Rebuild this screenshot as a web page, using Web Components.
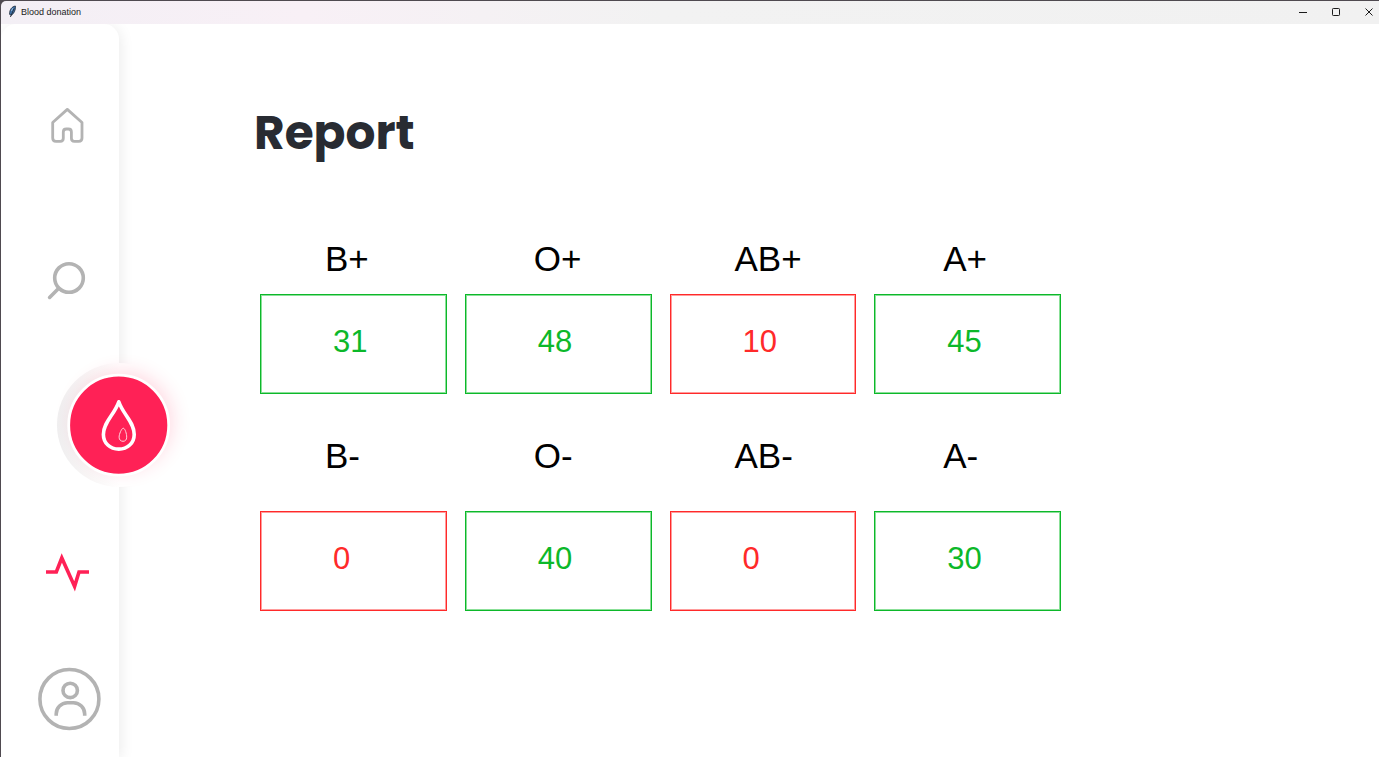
<!DOCTYPE html>
<html lang="en">
<head>
<meta charset="utf-8">
<title>Blood donation</title>
<style>
  html, body { margin: 0; min-height: 100%; background: #fff; }
  body { font-family: "Liberation Sans", Arial, sans-serif; color: #000; }
</style>
</head>
<body>
<app-window>
  <title-bar slot="title">Blood donation</title-bar>
  <side-nav slot="nav"></side-nav>
  <report-page heading="Report">
    <stock-row>
      <stock-cell group="B+">31</stock-cell>
      <stock-cell group="O+">48</stock-cell>
      <stock-cell group="AB+" low>10</stock-cell>
      <stock-cell group="A+">45</stock-cell>
    </stock-row>
    <stock-row loose>
      <stock-cell group="B-" low>0</stock-cell>
      <stock-cell group="O-">40</stock-cell>
      <stock-cell group="AB-" low>0</stock-cell>
      <stock-cell group="A-">30</stock-cell>
    </stock-row>
  </report-page>
</app-window>

<script>
class Base extends HTMLElement {
  constructor() {
    super();
    this.attachShadow({ mode: "open" });
  }
  connectedCallback() {
    this.shadowRoot.innerHTML = this.render();
  }
}

customElements.define("app-window", class extends Base {
  render() {
    return `<style>
      :host { display: flex; flex-direction: column; min-height: 100vh; box-sizing: border-box;
        border-top: 1px solid #4f4a50; border-left: 1px solid #4f4a50; background: #4f4a50; }
      .body { display: flex; flex: 1; background: #fff; }
      ::slotted(side-nav) { flex: none; }
      ::slotted(report-page) { flex: 1; min-width: 0; }
    </style>
    <slot name="title"></slot>
    <div class="body"><slot name="nav"></slot><slot></slot></div>`;
  }
});

customElements.define("title-bar", class extends Base {
  render() {
    return `<style>
      :host { display: flex; align-items: center; box-sizing: border-box; height: 23px; padding: 0 0 2px 7px;
        border-top-left-radius: 5px; color: #1b1b1b;
        background: linear-gradient(90deg, #f3eff5, #f8f0f6 22%, #f2f2f2 48%, #f1f1f1);
        font: 9px/12px "Liberation Sans", Arial, sans-serif; }
      .name { flex: 1; padding-left: 4px; }
      .controls { display: flex; gap: 13px; }
      button { display: flex; align-items: center; justify-content: center; width: 20px; height: 20px;
        padding: 0; border: 0; background: none; color: #1b1b1b; }
      svg { display: block; fill: none; stroke: currentColor; }
    </style>
    <svg width="9" height="13" viewBox="0 0 9 13" aria-hidden="true">
      <path d="M7.4 1 C4 1.6 1.4 4.4 1.6 9.4 L3.4 10.2 C6 8.6 7.8 5 7.4 1Z" fill="#3f74ad" stroke="#1d2836" stroke-width=".8"/>
      <path d="M6.2 3.2 L2.4 12" stroke="#1d2836" stroke-width=".9"/>
      <path d="M5 3 L3.4 6" stroke="#a9cdee" stroke-width=".8"/>
    </svg>
    <span class="name"><slot></slot></span>
    <div class="controls">
      <button aria-label="Minimize"><svg width="10" height="10" viewBox="0 0 10 10"><path d="M1 5.5H9"/></svg></button>
      <button aria-label="Maximize"><svg width="10" height="10" viewBox="0 0 10 10"><rect x="1.5" y="1.5" width="7" height="7" rx=".8"/></svg></button>
      <button aria-label="Close"><svg width="10" height="10" viewBox="0 0 10 10"><path d="M1.5 1.5L8.5 8.5M8.5 1.5L1.5 8.5"/></svg></button>
    </div>`;
  }
});

customElements.define("side-nav", class extends Base {
  render() {
    return `<style>
      :host { display: block; width: 118px; }
      nav { display: grid; grid-template-columns: 100%;
        grid-template-rows: 156px 154px 134px 160px 94px; align-items: center; justify-items: center;
        box-sizing: border-box; height: 100%; padding: 24px 0 11px; background: #fff;
        border-radius: 15px 15px 0 0; box-shadow: 2px 2px 14px rgba(0, 0, 0, .08); clip-path: inset(0 -80px 0 0); }
      a { display: block; color: #b3b3b3; margin-left: 14px; }
      a[aria-current] { color: #ff2156; }
      .donate { justify-self: end; margin: 0 -62px 0 0; width: 124px; height: 124px; border-radius: 50%;
        background: linear-gradient(90deg, #efeff0, #f8f6f6 25%, #fff 50%); position: relative; }
      .donate::before { content: ""; position: absolute; inset: 14px; border-radius: 50%;
        box-shadow: 4px -4px 20px rgba(255, 33, 86, .2); }
      .donate svg { position: relative; }
      svg { display: block; fill: none; stroke: currentColor; }
    </style>
    <nav aria-label="Main">
      <a href="#home" aria-label="Home"><svg width="36" height="36" viewBox="0 0 36 36" stroke-width="2.8" stroke-linejoin="round">
        <path d="M3.7 14.5 L18.3 1.4 L33 14.5 V30 Q33 33.3 29.7 33.3 H25.4 Q22.4 33.3 22.4 30.3 V24 Q22.4 21 19.4 21 H17.3 Q14.3 21 14.3 24 V30.3 Q14.3 33.3 11.3 33.3 H7 Q3.7 33.3 3.7 30 Z"/></svg></a>
      <a href="#search" aria-label="Search"><svg width="40" height="40" viewBox="0 0 40 40" stroke-width="3.6" stroke-linecap="round">
        <circle cx="22" cy="17" r="14.3"/><path d="M11.5 27.5 L2.6 36.4"/></svg></a>
      <a class="donate" href="#donate" aria-label="Donate"><svg width="124" height="124" viewBox="0 0 124 124">
        <circle cx="61.7" cy="62.2" r="50" fill="#ff2156" stroke="#fff" stroke-width="2.8"/>
        <path d="M61.8 38.8 C57.5 51.5 46.4 59 46.4 71.4 C46.4 80 53 86.1 61.8 86.1 C70.5 86.1 77.2 80 77.2 71.4 C77.2 59 66 51.5 61.8 38.8Z" stroke="#fff" stroke-width="3.6" stroke-linejoin="round"/>
        <path d="M66.2 65.2 C64.6 65.4 62.1 71 62.1 74.2 C62.1 76.8 63.8 78.3 66 78.3 C68.2 78.3 69.7 76.8 69.7 74.2 C69.7 71 68.2 65.4 66.2 65.2Z" stroke="#ffd3dd" stroke-width="1"/></svg></a>
      <a href="#report" aria-label="Report" aria-current="page"><svg width="44" height="44" viewBox="0 0 44 44" stroke-width="3.6">
        <path d="M1 22 H11.3 L16.8 8 L29.6 36.4 L34 22 H44"/></svg></a>
      <a href="#profile" aria-label="Profile"><svg width="72" height="72" viewBox="0 0 72 72" stroke-width="3.6">
        <circle cx="38.4" cy="36" r="29.5"/><circle cx="39.2" cy="27.4" r="7.2"/>
        <path d="M25.2 52.7 V51 A11.3 11.3 0 0 1 36.5 39.7 H42.4 A11.3 11.3 0 0 1 53.7 51 V52.7"/></svg></a>
    </nav>`;
  }
});

customElements.define("report-page", class extends Base {
  render() {
    return `<style>
      :host { display: block; }
      main { padding: 77px 24px 24px 135px; }
      h1 { margin: 0 0 74px; color: #282b32; font: 700 47px/64px Poppins, Inter, sans-serif; }
      .rows { display: grid; gap: 42px; max-width: 801px; padding-left: 6px; }
    </style>
    <main><h1>${this.getAttribute("heading")}</h1><div class="rows"><slot></slot></div></main>`;
  }
});

customElements.define("stock-row", class extends Base {
  render() {
    return `<style>
      :host { display: grid; grid-template-columns: repeat(4, minmax(0, 1fr)); column-gap: 18px; --box-gap: 15px; }
      :host([loose]) { --box-gap: 35px; }
      ::slotted(:nth-child(odd)) { --label-indent: 65px; }
      ::slotted(:nth-child(even)) { --label-indent: 69px; }
    </style><slot></slot>`;
  }
});

customElements.define("stock-cell", class extends Base {
  render() {
    return `<style>
      :host { display: block; --tone: #0cb82a; --edge: #8be098; }
      :host([low]) { --tone: #ff2a2a; --edge: #ff9c9c; }
      dl, dd { margin: 0; }
      dt { padding-left: var(--label-indent); font-size: 35px; line-height: 40px; white-space: nowrap; }
      dd { box-sizing: border-box; height: 100px; margin-top: var(--box-gap); padding: 29px 0 0 72px;
        border: 1px solid var(--tone); box-shadow: inset 0 0 0 1px var(--edge);
        color: var(--tone); font-size: 31px; line-height: 36px; }
    </style>
    <dl><dt>${this.getAttribute("group")}</dt><dd><slot></slot></dd></dl>`;
  }
});
</script>
</body>
</html>
